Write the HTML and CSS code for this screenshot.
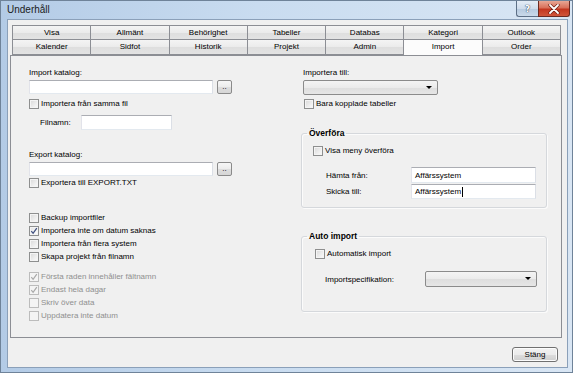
FILE: index.html
```html
<!DOCTYPE html>
<html lang="sv">
<head>
<meta charset="utf-8">
<title>Underhåll</title>
<link rel="stylesheet" href="styles.css">
</head>
<body>
<div class="window">
  <div class="titlebar">
    <span class="title">Underhåll</span>
    <div class="caption-btns">
      <div class="cbtn help"><span>?</span></div>
      <div class="cbtn close">
        <svg width="12" height="10" viewBox="0 0 12 10"><path d="M2 1 L10 9 M10 1 L2 9" stroke="#6b1a10" stroke-width="3.2" stroke-linecap="round"/><path d="M2 1 L10 9 M10 1 L2 9" stroke="#ffffff" stroke-width="1.8" stroke-linecap="round"/></svg>
      </div>
    </div>
  </div>
  <div class="client">
    <div class="tabstrip">
      <div class="tabrow">
        <div class="tab">Visa</div>
        <div class="tab">Allmänt</div>
        <div class="tab">Behörighet</div>
        <div class="tab">Tabeller</div>
        <div class="tab">Databas</div>
        <div class="tab">Kategori</div>
        <div class="tab">Outlook</div>
      </div>
      <div class="tabrow second">
        <div class="tab">Kalender</div>
        <div class="tab">Sidfot</div>
        <div class="tab">Historik</div>
        <div class="tab">Projekt</div>
        <div class="tab">Admin</div>
        <div class="tab selected">Import</div>
        <div class="tab">Order</div>
      </div>
    </div>
    <div class="page">
      <div class="col left">
        <div class="lbl">Import katalog:</div>
        <div class="pathrow"><div class="textbox path"></div><div class="dots">..</div></div>
        <label class="chk mt5"><span class="box"></span>Importera från samma fil</label>
        <div class="filrow"><span class="fil-lbl">Filnamn:</span><div class="textbox fil"></div></div>
        <div class="lbl mt20">Export katalog:</div>
        <div class="pathrow"><div class="textbox path"></div><div class="dots">..</div></div>
        <label class="chk mt2"><span class="box"></span>Exportera till EXPORT.TXT</label>
        <div class="chkgroup g1">
          <label class="chk row"><span class="box"></span>Backup importfiler</label>
          <label class="chk row"><span class="box checked"><svg width="8" height="8" viewBox="0 0 8 8"><path d="M1.3 4.2 L3.1 6.3 L6.8 1.2" fill="none" stroke="#3f4f7f" stroke-width="1.3"/></svg></span>Importera inte om datum saknas</label>
          <label class="chk row"><span class="box"></span>Importera från flera system</label>
          <label class="chk row"><span class="box"></span>Skapa projekt från filnamn</label>
        </div>
        <div class="chkgroup g2">
          <label class="chk row disabled"><span class="box checked"><svg width="8" height="8" viewBox="0 0 8 8"><path d="M1.3 4.2 L3.1 6.3 L6.8 1.2" fill="none" stroke="#a8a8a8" stroke-width="1.2"/></svg></span>Första raden innehåller fältnamn</label>
          <label class="chk row disabled"><span class="box checked"><svg width="8" height="8" viewBox="0 0 8 8"><path d="M1.3 4.2 L3.1 6.3 L6.8 1.2" fill="none" stroke="#a8a8a8" stroke-width="1.2"/></svg></span>Endast hela dagar</label>
          <label class="chk row disabled"><span class="box"></span>Skriv över data</label>
          <label class="chk row disabled"><span class="box"></span>Uppdatera inte datum</label>
        </div>
      </div>
      <div class="col right">
        <div class="lbl">Importera till:</div>
        <div class="combo to"><span class="arrow"></span></div>
        <label class="chk mt4 pl1"><span class="box"></span>Bara kopplade tabeller</label>
        <fieldset class="group g-over">
          <legend>Överföra</legend>
          <label class="chk over-chk"><span class="box"></span>Visa meny överföra</label>
          <div class="frow first"><span class="f-lbl">Hämta från:</span><div class="textbox fval">Affärssystem</div></div>
          <div class="frow second"><span class="f-lbl">Skicka till:</span><div class="textbox fval short">Affärssystem<span class="caret"></span></div></div>
        </fieldset>
        <fieldset class="group g-auto">
          <legend>Auto import</legend>
          <label class="chk auto-chk"><span class="box"></span>Automatisk import</label>
          <div class="srow"><span class="s-lbl">Importspecifikation:</span><div class="combo spec"><span class="arrow"></span></div></div>
        </fieldset>
      </div>
    </div>
    <div class="footer"><div class="btn">Stäng</div></div>
  </div>
</div>
</body>
</html>
```
FILE: styles.css
```css
* { box-sizing: border-box; }
body {
  margin: 0;
  font-family: "Liberation Sans", Arial, sans-serif;
  font-size: 8px;
  color: #000;
  background: #fff;
}
.window {
  width: 573px;
  height: 373px;
  border: 1px solid #6f8399;
  background: linear-gradient(to right, #b3cbe6 0%, #c9dcf0 45%, #d9e6f4 100%);
  padding: 0 4px 4px 6px;
  display: flex;
  flex-direction: column;
}
.titlebar {
  height: 18px;
  display: flex;
  justify-content: space-between;
  align-items: flex-start;
}
.title {
  font-size: 10px;
  line-height: 15px;
  padding-left: 0;
  color: #1b1b1b;
  margin-top: 1px;
}
.caption-btns {
  display: flex;
  margin-right: -2px;
}
.cbtn {
  height: 16px;
  display: flex;
  align-items: center;
  justify-content: center;
  border: 1px solid #5d6f86;
  border-top: none;
}
.help {
  width: 22px;
  border-right: none;
  border-radius: 0 0 0 3px;
  background: linear-gradient(to bottom, #e4ecf6 0%, #cfdcec 50%, #b6c9df 51%, #c9d9ea 100%);
}
.help span {
  font-family: "DejaVu Sans", sans-serif;
  font-weight: bold;
  font-size: 9px;
  color: #fff;
  text-shadow: 0 0 1px #2c3e5a, 0 0 1px #2c3e5a;
}
.close {
  width: 32px;
  border-radius: 0 0 3px 0;
  border-color: #6b2a22;
  background: linear-gradient(to bottom, #e8a795 0%, #d9705a 45%, #c3361f 55%, #d0563b 100%);
}
.client {
  flex: 1;
  border: 1px solid #8ba0b9;
  background: #f0f0f0;
  display: flex;
  flex-direction: column;
}
.tabstrip {
  margin: 5px 0 0 4px;
  width: 549px;
}
.tabrow {
  display: flex;
  height: 15px;
}
.tab {
  flex: 1;
  border: 1px solid #8c8e94;
  border-left: none;
  background: linear-gradient(to bottom, #f4f4f4 0%, #ebebeb 50%, #dedede 51%, #e3e3e3 100%);
  text-align: center;
  line-height: 13px;
  white-space: nowrap;
}
.tab:first-child { border-left: 1px solid #8c8e94; }
.tabrow.second .tab { border-top: none; height: 15px; line-height: 13px; }
.tab.selected {
  background: #fcfcfc;
  position: relative;
  z-index: 1;
  height: 16px;
  border-bottom: none;
  line-height: 12px;
}
.page {
  margin-left: 2px;
  width: 552px;
  height: 283px;
  border: 1px solid #8c8e94;
  background: #f0f0f0;
  display: grid;
  grid-template-columns: 274px 1fr;
  padding: 12px 0 0 18px;
}
.col { display: flex; flex-direction: column; align-items: flex-start; }
.lbl { height: 10px; line-height: 10px; }
.mt20 { margin-top: 20px; }
.mt5 { margin-top: 5px; }
.mt4 { margin-top: 4px; }
.mt2 { margin-top: 2px; }
.pl1 { padding-left: 1px; }
.pathrow { display: flex; margin-top: 2px; }
.textbox {
  background: #fff;
  border: 1px solid;
  border-color: #abadb3 #dbdfe6 #e3e9ef #e2e3ea;
}
.textbox.path { width: 184px; height: 14px; }
.dots {
  width: 15px;
  height: 14px;
  margin-left: 4px;
  border: 1px solid #8a8a8a;
  border-radius: 2px;
  background: linear-gradient(to bottom, #f6f6f6 0%, #ececec 50%, #dddddd 51%, #d6d6d6 100%);
  text-align: center;
  line-height: 11px;
  font-size: 8px;
}
.chk {
  display: flex;
  align-items: center;
  height: 10px;
  line-height: 10px;
  white-space: nowrap;
}
.chk.row { height: 13px; }
.box {
  width: 10px;
  height: 10px;
  margin-right: 2px;
  flex: none;
  border: 1px solid #8e8f8f;
  background: linear-gradient(135deg, #d8d8d8 0%, #eeeeee 60%, #fbfbfb 100%);
  box-shadow: inset 0 0 0 1px #f4f4f4;
  display: flex;
  align-items: center;
  justify-content: center;
}
.box.checked { background: linear-gradient(135deg, #e2e2e2 0%, #f5f5f5 60%, #ffffff 100%); }
.disabled { color: #8f8f8f; }
.disabled .box { border-color: #bcbcbc; background: #f4f4f4; box-shadow: none; }
.filrow { display: flex; align-items: center; margin-top: 6px; padding-left: 11px; height: 15px; }
.fil-lbl { width: 41px; }
.textbox.fil { width: 91px; height: 15px; }
.chkgroup { display: flex; flex-direction: column; }
.g1 { margin-top: 23px; }
.g2 { margin-top: 7px; }
.combo {
  position: relative;
  height: 15px;
  border: 1px solid #8b8b8b;
  border-radius: 2px;
  background: linear-gradient(to bottom, #f4f4f4 0%, #ebebeb 50%, #dedede 51%, #e6e6e6 100%);
}
.combo.to { width: 135px; margin-top: 2px; }
.arrow {
  position: absolute;
  right: 5px;
  top: 5px;
  width: 0;
  height: 0;
  border-left: 3px solid transparent;
  border-right: 3px solid transparent;
  border-top: 3px solid #000;
}
.group {
  margin: 0;
  padding: 0 0 8px 0;
  border: 1px solid #d5d8dc;
  border-radius: 3px;
  width: 246px;
  margin-left: -2px;
  box-shadow: inset 1px 1px 0 #fbfbfb, 1px 1px 0 #fbfbfb;
}
.group legend {
  font-weight: bold;
  font-size: 8.5px;
  line-height: 12px;
  padding: 0 2px;
  margin-left: 5px;
}
.g-over { margin-top: 18px; }
.over-chk { margin-top: 7px; margin-left: 11px; }
.frow { display: flex; align-items: center; padding-left: 24px; }
.frow.first { margin-top: 11px; height: 16px; }
.frow.second { margin-top: 1px; height: 15px; }
.f-lbl { width: 85px; }
.textbox.fval {
  width: 125px;
  height: 100%;
  padding-left: 3px;
  line-height: 13px;
  display: flex;
  align-items: center;
}
.caret { display: inline-block; width: 1px; height: 10px; background: #000; margin-left: 1px; }
.g-auto { margin-top: 22px; padding-bottom: 24px; }
.auto-chk { margin-top: 7px; margin-left: 13px; }
.srow { display: flex; align-items: center; margin-top: 12px; padding-left: 23px; height: 16px; }
.s-lbl { width: 100px; }
.combo.spec { width: 112px; height: 16px; }
.footer {
  display: flex;
  justify-content: flex-end;
  padding: 9px 9px 0 0;
}
.btn {
  width: 46px;
  height: 15px;
  border: 1px solid #707070;
  border-radius: 3px;
  background: linear-gradient(to bottom, #f2f2f2 0%, #ebebeb 50%, #dddddd 51%, #cfcfcf 100%);
  box-shadow: inset 0 0 0 1px #fcfcfc;
  text-align: center;
  line-height: 13px;
}
```
